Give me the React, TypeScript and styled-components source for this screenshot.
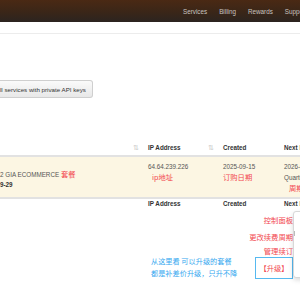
import styled, { createGlobalStyle } from "styled-components"

const Global = createGlobalStyle`
    html, body {
        margin: 0;
        padding: 0;
        background: #fff;
        overflow: hidden;
    }
    body {
        font-family: "Liberation Sans", Arial, sans-serif;
        color: #333;
    }
`

const Page = styled.div`
    width: 300px;
    height: 300px;
    position: relative;
    overflow: hidden;
`

const Header = styled.div`
    height: 22px;
    background: linear-gradient(to bottom, #4a2914 0%, #3a2618 55%, #2b2420 100%);
    display: flex;
    align-items: center;
    padding-left: 183px;
    gap: 12px;
    white-space: nowrap;
`

const NavLink = styled.span`
    font-size: 6.3px;
    color: #c9c4c0;
`

const Rule = styled.div`
    height: 1px;
    background: #ececec;
    margin-top: 11px;
`

const Toolbar = styled.div`
    padding-top: 46px;
    display: flex;
`

const Button = styled.div`
    height: 18px;
    box-sizing: border-box;
    padding: 0 6px 0 0;
    display: flex;
    align-items: center;
    font-size: 6.2px;
    color: #333;
    background: linear-gradient(to bottom, #fafafa, #e8e8e8);
    border: 1px solid #cfcfcf;
    border-left: none;
    border-radius: 0 3px 3px 0;
    white-space: nowrap;
`

const Table = styled.div`
    margin-top: 42px;
    display: grid;
    grid-template-columns: 143px 75px 61px 1fr;
    font-size: 6.3px;
    white-space: nowrap;
`

const HeadCell = styled.div<{ $sort?: boolean }>`
    height: 17px;
    box-sizing: border-box;
    display: flex;
    align-items: center;
    justify-content: ${p => (p.$sort ? "flex-end" : "flex-start")};
    padding: 0 5px 0 5px;
    font-weight: bold;
    color: #333;
    border-bottom: 2px solid #e2e2e2;
`

const FootCell = styled(HeadCell)`
    border-bottom: none;
    height: 12px;
    align-items: flex-start;
    padding-top: 1px;
`

const HeadText = styled.span`
    flex: 1;
`

const Sort = styled.span`
    color: #c8c8c8;
    font-size: 7px;
    font-weight: normal;
    letter-spacing: -1px;
`

const Cell = styled.div`
    background: #fcf6e3;
    height: 42px;
    box-sizing: border-box;
    padding: 4px 5px 0 5px;
    color: #555;
    border-bottom: 2px solid #e2e2e2;
    display: flex;
    flex-direction: column;
    overflow: hidden;
`

const FirstCell = styled(Cell)`
    padding-left: 0;
    padding-top: 12px;
`

const Line = styled.div`
    height: 11px;
    line-height: 11px;
`

const Bold = styled.div`
    font-weight: bold;
    color: #333;
    height: 10px;
    line-height: 10px;
`

const Red = styled.span<{ $indent?: number }>`
    color: #f2474f;
    font-size: 7.3px;
    padding-left: ${p => p.$indent || 0}px;
    font-family: "Noto Sans CJK SC", "Liberation Sans", sans-serif;
`

const Notes = styled.div`
    display: flex;
    align-items: flex-end;
    justify-content: flex-end;
    padding-right: 7px;
    gap: 12px;
    font-family: "Noto Sans CJK SC", "Liberation Sans", sans-serif;
`

const BlueNote = styled.div`
    color: #35a8ef;
    font-size: 7.2px;
    line-height: 12px;
    padding-bottom: 0;
`

const Labels = styled.div`
    display: flex;
    flex-direction: column;
    align-items: flex-end;
`

const Label = styled.div<{ $h: number }>`
    color: #f2474f;
    font-size: 7.3px;
    height: ${p => p.$h}px;
    line-height: ${p => p.$h}px;
`

const Boxed = styled.div`
    width: 38px;
    height: 22px;
    box-sizing: border-box;
    border: 1px solid #56b9f0;
    display: flex;
    align-items: center;
    justify-content: center;
    color: #f2474f;
    font-size: 7.3px;
`

const Menu = styled.div`
    position: absolute;
    left: 293px;
    top: 211px;
    width: 120px;
    height: 65px;
    background: #fff;
    border: 1px solid #d8d8d8;
    border-radius: 3px;
    box-shadow: 0 2px 5px rgba(0, 0, 0, 0.15);
`

const MenuDivider = styled.div`
    margin-top: 19px;
    height: 5px;
    width: 1px;
    background: #bbb;
`

const App = () => (
    <Page>
        <Global />
        <Header>
            <NavLink>Services</NavLink>
            <NavLink>Billing</NavLink>
            <NavLink>Rewards</NavLink>
            <NavLink>Support</NavLink>
        </Header>
        <Rule />
        <Toolbar>
            <Button>ll services with private API keys</Button>
        </Toolbar>
        <Table>
            <HeadCell $sort><Sort>⇅</Sort></HeadCell>
            <HeadCell><HeadText>IP Address</HeadText><Sort>⇅</Sort></HeadCell>
            <HeadCell>Created</HeadCell>
            <HeadCell>Next Due Date</HeadCell>

            <FirstCell>
                <Line>2 GIA ECOMMERCE <Red>套餐</Red></Line>
                <Bold>9-29</Bold>
            </FirstCell>
            <Cell>
                <Line>64.64.239.226</Line>
                <Line><Red $indent={4}>ip地址</Red></Line>
            </Cell>
            <Cell>
                <Line>2025-09-15</Line>
                <Line><Red>订购日期</Red></Line>
            </Cell>
            <Cell>
                <Line>2026-03-15</Line>
                <Line>Quarterly</Line>
                <Line><Red $indent={5}>周期</Red></Line>
            </Cell>

            <FootCell />
            <FootCell>IP Address</FootCell>
            <FootCell>Created</FootCell>
            <FootCell>Next Due Date</FootCell>
        </Table>
        <Notes>
            <BlueNote>
                从这里看 可以升级的套餐<br />
                都是补差价升级，只升不降
            </BlueNote>
            <Labels>
                <Label $h={18}>控制面板</Label>
                <Label $h={16}>更改续费周期</Label>
                <Label $h={12}>管理续订</Label>
                <Boxed>【升级】</Boxed>
            </Labels>
        </Notes>
        <Menu>
            <MenuDivider />
        </Menu>
    </Page>
)

export default App
